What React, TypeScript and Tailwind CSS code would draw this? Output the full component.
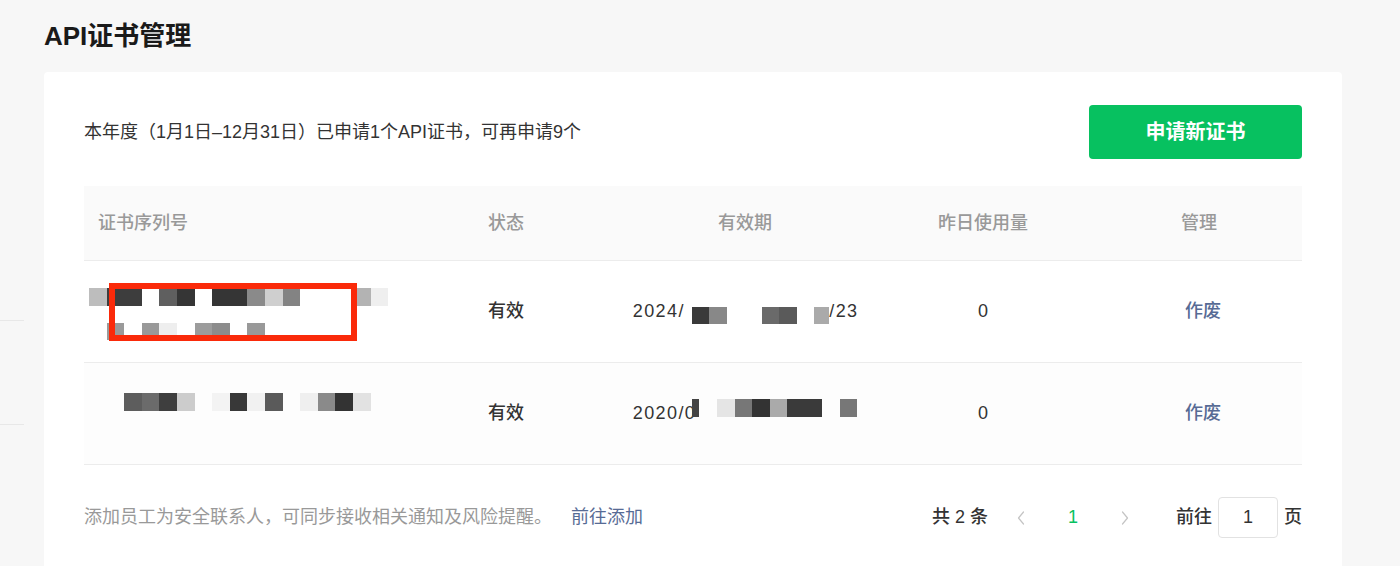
import React from "react";

const row1Line1 = [
  "bg-[#bdbdbd]", "bg-[#3d3d3d]", "bg-[#3d3d3d]", "", "bg-[#5f5f5f]", "bg-[#353535]", "",
  "bg-[#353535]", "bg-[#353535]", "bg-[#8a8a8a]", "bg-[#cfcfcf]", "bg-[#838383]", "", "", "",
  "bg-[#b3b3b3]", "bg-[#efefef]",
];
const row1Line2 = [
  "", "bg-[#9a9a9a]", "", "bg-[#999999]", "bg-[#eeeeee]", "", "bg-[#9c9c9c]", "bg-[#8c8c8c]", "", "bg-[#999999]",
];
const row2Line = [
  "", "", "bg-[#5d5d5d]", "bg-[#6b6b6b]", "bg-[#3e3e3e]", "bg-[#cccccc]", "", "bg-[#f3f3f3]",
  "bg-[#383838]", "bg-[#f1f1f1]", "bg-[#5a5a5a]", "", "bg-[#efefef]", "bg-[#8a8a8a]", "bg-[#333333]",
  "bg-[#e2e2e2]",
];

function Mosaic({ cells }: { cells: string[] }) {
  return (
    <div className="flex">
      {cells.map((c, i) => (
        <div key={i} className={`w-[17.6px] h-[17.6px] shrink-0 ${c}`} />
      ))}
    </div>
  );
}

function Chevron({ dir }: { dir: "left" | "right" }) {
  return (
    <svg width="8" height="14" viewBox="0 0 8 14" fill="none">
      <polyline
        points={dir === "left" ? "6.5,1 1.5,7 6.5,13" : "1.5,1 6.5,7 1.5,13"}
        stroke="#c4c4c4"
        strokeWidth="1.2"
        strokeLinecap="round"
        strokeLinejoin="round"
      />
    </svg>
  );
}

const cols = "grid grid-cols-[390px_145px_252px_224px_208px]";

export default function App() {
  return (
    <div className="min-h-screen w-full bg-[#f7f7f7] flex font-['Liberation_Sans','Noto_Sans_CJK_SC',sans-serif] text-[#333]">
      <div className="w-[24px] shrink-0 flex flex-col">
        <div className="h-[320px]" />
        <div className="h-px bg-[#e8e8e8]" />
        <div className="h-[103px]" />
        <div className="h-px bg-[#e8e8e8]" />
      </div>
      <div className="ml-[20px] w-[1298px] shrink-0 flex flex-col">
        <div className="h-[72px] flex items-center">
          <h1 className="text-[26px] leading-none font-semibold text-[#1a1a1a]">API证书管理</h1>
        </div>
        <div className="bg-white rounded-[4px] px-[40px] pt-[33px] pb-[40px]">
          <div className="flex items-center justify-between h-[54px]">
            <p className="text-[18px] leading-none text-[#333]">
              本年度（1月1日–12月31日）已申请1个API证书，可再申请9个
            </p>
            <button className="w-[213px] h-[54px] rounded-[4px] bg-[#07c160] text-white text-[20px] font-semibold">
              申请新证书
            </button>
          </div>

          <div className="relative mt-[27px] text-[18px]">
            <div className={`${cols} h-[75px] bg-[#fafafa] border-b border-[#ececec] text-[#999] font-medium`}>
              <div className="flex items-center pl-[14px]">证书序列号</div>
              <div className="flex items-center pl-[14px]">状态</div>
              <div className="flex items-center justify-center">有效期</div>
              <div className="flex items-center justify-center">昨日使用量</div>
              <div className="flex items-center justify-center">管理</div>
            </div>

            <div className={`${cols} h-[102px] border-b border-[#ececec]`}>
              <div className="flex flex-col gap-[17px] pl-[5px] pt-[27px]">
                <Mosaic cells={row1Line1} />
                <Mosaic cells={row1Line2} />
              </div>
              <div className="flex items-center pl-[14px] font-medium">有效</div>
              <div className="flex items-center justify-center tracking-[1.4px]">
                <span className="w-[59px]">2024/</span>
                <div className="flex mt-[8px]">
                  <div className="w-[17.5px] h-[17.6px] bg-[#3a3a3a]" />
                  <div className="w-[17.5px] h-[17.6px] bg-[#888888]" />
                  <div className="w-[35px] h-[17.6px]" />
                  <div className="w-[17.5px] h-[17.6px] bg-[#6a6a6a]" />
                  <div className="w-[17.5px] h-[17.6px] bg-[#5a5a5a]" />
                  <div className="w-[17.5px] h-[17.6px]" />
                  <div className="w-[15px] h-[17.6px] bg-[#aaaaaa]" />
                </div>
                <span className="w-[28px]">/23</span>
              </div>
              <div className="flex items-center justify-center">0</div>
              <div className="flex items-center justify-center pl-[8px] text-[#576b95] font-medium">作废</div>
            </div>

            <div className={`${cols} h-[102px] border-b border-[#ececec] bg-[#fdfdfd]`}>
              <div className="flex flex-col pl-[5px] pt-[30px]">
                <Mosaic cells={row2Line} />
              </div>
              <div className="flex items-center pl-[14px] font-medium">有效</div>
              <div className="flex items-center justify-center tracking-[1.4px]">
                <span className="w-[59px] whitespace-nowrap">2020/0</span>
                <div className="flex mb-[11px]">
                  <div className="w-[7.5px] h-[17.6px] bg-[#444444]" />
                  <div className="w-[18px] h-[17.6px]" />
                  <div className="w-[17.5px] h-[17.6px] bg-[#e5e5e5]" />
                  <div className="w-[17.5px] h-[17.6px] bg-[#777777]" />
                  <div className="w-[17.5px] h-[17.6px] bg-[#333333]" />
                  <div className="w-[17.5px] h-[17.6px] bg-[#aaaaaa]" />
                  <div className="w-[35px] h-[17.6px] bg-[#3a3a3a]" />
                  <div className="w-[17.5px] h-[17.6px]" />
                  <div className="w-[17.5px] h-[17.6px] bg-[#777777]" />
                </div>
              </div>
              <div className="flex items-center justify-center">0</div>
              <div className="flex items-center justify-center pl-[8px] text-[#576b95] font-medium">作废</div>
            </div>

            <div className="absolute left-[25px] top-[97px] w-[248px] h-[58px] border-[6px] border-[#fa2a0a]" />
          </div>

          <div className="mt-[32px] flex items-center justify-between h-[41px] text-[18px]">
            <div className="flex items-center text-[#999]">
              <span>添加员工为安全联系人，可同步接收相关通知及风险提醒。</span>
              <span className="ml-[19px] text-[#576b95]">前往添加</span>
            </div>
            <div className="flex items-center">
              <span className="font-medium text-[#333] whitespace-pre">共 2 条</span>
              <div className="ml-[7px] flex">
                <div className="w-[52px] flex items-center justify-center">
                  <Chevron dir="left" />
                </div>
                <div className="w-[52px] flex items-center justify-center text-[#07c160]">1</div>
                <div className="w-[52px] flex items-center justify-center">
                  <Chevron dir="right" />
                </div>
              </div>
              <span className="ml-[25px] font-medium">前往</span>
              <div className="ml-[6px] w-[60px] h-[41px] rounded-[4px] border border-[#e2e2e2] flex items-center justify-center">
                1
              </div>
              <span className="ml-[6px] font-medium">页</span>
            </div>
          </div>
        </div>
      </div>
    </div>
  );
}
